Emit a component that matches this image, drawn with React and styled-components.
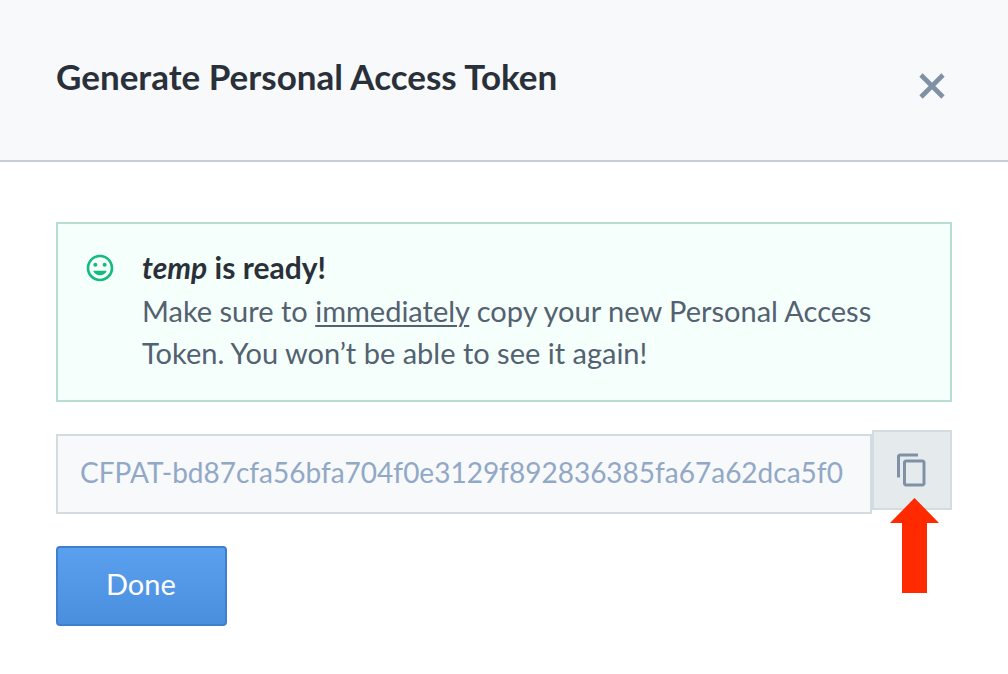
import React, { useRef } from "react";
import styled, { createGlobalStyle } from "styled-components";
import { MdContentCopy, MdInsertEmoticon } from "react-icons/md";

const GlobalStyle = createGlobalStyle`
  * { box-sizing: border-box; }
  body {
    margin: 0;
    background: #ffffff;
    font-family: Lato, "Noto Sans", sans-serif;
    font-size: 29px;
    color: #536171;
  }
`;

const Header = styled.header`
  display: flex;
  justify-content: space-between;
  align-items: flex-start;
  padding: 54px 56px 42px;
  background: #f7f9fa;
  border-bottom: 2px solid #c3cfd5;
`;

const Title = styled.h1`
  margin: 0;
  font-size: 35px;
  line-height: 44px;
  font-weight: 700;
  color: #2a3039;
`;

const CloseButton = styled.button`
  display: flex;
  align-items: center;
  justify-content: center;
  width: 40px;
  height: 64px;
  padding: 0;
  border: 0;
  background: none;
  color: #8091a5;
  cursor: pointer;
`;

const Content = styled.main`
  display: flex;
  flex-direction: column;
  align-items: stretch;
  gap: 32px;
  padding: 60px 56px 48px;
`;

const Note = styled.section`
  display: flex;
  gap: 25px;
  padding: 22px 56px 26px 25px;
  border: 2px solid #b7ddd0;
  background: #f5fffb;
`;

const NoteIcon = styled(MdInsertEmoticon)`
  flex: none;
  width: 34px;
  height: 44px;
  padding: 0 1px;
  color: #14ba7f;
`;

const NoteTitle = styled.h2`
  margin: 0;
  font-size: 30px;
  line-height: 42px;
  font-weight: 700;
  color: #2a3039;
`;

const NoteText = styled.p`
  margin: 2px 0 0;
  line-height: 42px;
`;

const Underlined = styled.span`
  text-decoration: underline;
  text-decoration-thickness: 2px;
  text-underline-offset: 3px;
`;

const TokenRow = styled.div`
  display: flex;
  align-items: flex-end;
`;

const TokenInput = styled.input`
  flex: 1;
  min-width: 0;
  height: 80px;
  padding: 0 20px 4px 22px;
  border: 2px solid #d3dce0;
  border-radius: 0;
  background: #f7f9fa;
  color: #91a8c6;
  font-family: inherit;
  font-size: 28px;
  outline: none;
`;

const CopyArea = styled.div`
  position: relative;
  margin: -4px 0 4px;
`;

const CopyButton = styled.button`
  display: flex;
  align-items: center;
  justify-content: center;
  width: 80px;
  height: 80px;
  padding: 0;
  border: 2px solid #d3dce0;
  background: #e5ebed;
  color: #8091a5;
  cursor: pointer;
`;

const Pointer = styled.svg`
  position: absolute;
  top: 68px;
  left: 18px;
  pointer-events: none;
`;

const DoneButton = styled.button`
  align-self: flex-start;
  height: 80px;
  padding: 0 49px 6px 48px;
  border: 2px solid #3c80cf;
  border-radius: 4px;
  background: linear-gradient(#5b9fef, #4a8fde);
  color: #ffffff;
  font: inherit;
  cursor: pointer;
`;

const TOKEN = "CFPAT-bd87cfa56bfa704f0e3129f892836385fa67a62dca5f0";

export default function App() {
  const field = useRef(null);
  const copy = () => {
    field.current.select();
    navigator.clipboard?.writeText(TOKEN);
  };
  return (
    <>
      <GlobalStyle />
      <Header>
        <Title>Generate Personal Access Token</Title>
        <CloseButton aria-label="Close">
          <svg width="26" height="26" viewBox="0 0 26 26" fill="none" stroke="currentColor" strokeWidth="4.6">
            <path d="M2 2 24 24M24 2 2 24" />
          </svg>
        </CloseButton>
      </Header>
      <Content>
        <Note>
          <NoteIcon aria-hidden="true" />
          <div>
            <NoteTitle><em>temp</em> is ready!</NoteTitle>
            <NoteText>
              Make sure to <Underlined>immediately</Underlined> copy your new Personal Access
              Token. You won’t be able to see it again!
            </NoteText>
          </div>
        </Note>
        <TokenRow>
          <TokenInput ref={field} readOnly aria-label="Personal Access Token" value={TOKEN} />
          <CopyArea>
            <CopyButton aria-label="Copy token" onClick={copy}>
              <MdContentCopy size={36} />
            </CopyButton>
            <Pointer width="50" height="95" viewBox="0 0 50 95" aria-hidden="true">
              <path d="M24.5 0 49 25H37V95H12V25H0Z" fill="#ff2a00" />
            </Pointer>
          </CopyArea>
        </TokenRow>
        <DoneButton>Done</DoneButton>
      </Content>
    </>
  );
}
